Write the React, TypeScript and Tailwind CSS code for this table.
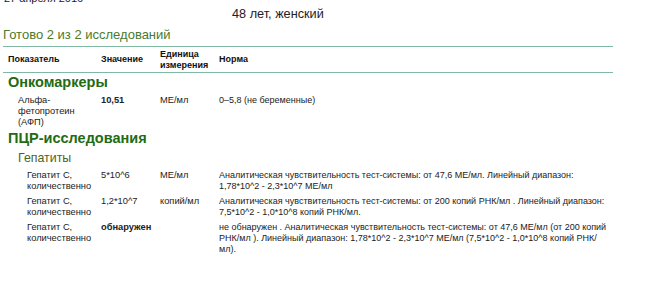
const font = { fontFamily: '"Liberation Sans", Arial, sans-serif' };

type Row = { name: string[]; value: string; bold?: boolean; unit: string; norm: string[] };

const onco: Row[] = [
  { name: ["Альфа-", "фетопротеин", "(АФП)"], value: "10,51", bold: true, unit: "МЕ/мл", norm: ["0–5,8 (не беременные)"] },
];

const pcr: Row[] = [
  {
    name: ["Гепатит С,", "количественно"],
    value: "5*10^6",
    unit: "МЕ/мл",
    norm: ["Аналитическая чувствительность тест-системы: от 47,6 МЕ/мл. Линейный диапазон:", "1,78*10^2 - 2,3*10^7 МЕ/мл"],
  },
  {
    name: ["Гепатит С,", "количественно"],
    value: "1,2*10^7",
    unit: "копий/мл",
    norm: ["Аналитическая чувствительность тест-системы: от 200 копий РНК/мл . Линейный диапазон:", "7,5*10^2 - 1,0*10^8 копий РНК/мл."],
  },
  {
    name: ["Гепатит С,", "количественно"],
    value: "обнаружен",
    bold: true,
    unit: "",
    norm: [
      "не обнаружен . Аналитическая чувствительность тест-системы: от 47,6 МЕ/мл (от 200 копий",
      "РНК/мл ). Линейный диапазон: 1,78*10^2 - 2,3*10^7 МЕ/мл (7,5*10^2 - 1,0*10^8 копий РНК/",
      "мл).",
    ],
  },
];

function ResultRow({ row, indent }: { row: Row; indent: string }) {
  return (
    <div className="grid grid-cols-[98px_59px_59px_1fr] text-[9.3px] leading-[11px] text-[#222]">
      <div className={indent}>
        {row.name.map((n, i) => (
          <div key={i}>{n}</div>
        ))}
      </div>
      <div className={row.bold ? "font-bold" : ""}>{row.value}</div>
      <div>{row.unit}</div>
      <div className="whitespace-nowrap text-[9px]">
        {row.norm.map((n, i) => (
          <div key={i}>{n}</div>
        ))}
      </div>
    </div>
  );
}

export default function App() {
  return (
    <div className="w-[649px] h-[291px] overflow-hidden bg-white" style={font}>
      <div className="ml-[4px] -mt-[8px] text-[11px] leading-[13px] text-[#222]">27 апреля 2016</div>
      <div className="pl-[232px] mt-[2px] text-[12.7px] leading-[15px] text-[#222]">48 лет, женский</div>

      <div className="ml-[3px] w-[610px]">
        <div className="mt-[5px] text-[13px] leading-[15px] text-[#4a7a2c]">Готово 2 из 2 исследований</div>

        <div className="mt-[4px] border-t border-b border-[#7fb8a3] grid grid-cols-[98px_59px_59px_1fr] items-center h-[27px] text-[9px] leading-[11px] font-bold text-[#111]">
          <div className="pl-[5px]">Показатель</div>
          <div>Значение</div>
          <div>
            Единица
            <br />
            измерения
          </div>
          <div>Норма</div>
        </div>

        <div className="pl-[5px] mt-[1px] text-[14.5px] leading-[17px] font-bold text-[#236b12]">Онкомаркеры</div>
        <div className="mt-[4px] flex flex-col gap-[4px]">
          {onco.map((r, i) => (
            <ResultRow key={i} row={r} indent="pl-[15px]" />
          ))}
        </div>

        <div className="pl-[5px] mt-[2px] text-[14.5px] leading-[17px] font-bold text-[#236b12]">ПЦР-исследования</div>
        <div className="pl-[15px] mt-[4px] text-[12.4px] leading-[15px] text-[#4d6420]">Гепатиты</div>
        <div className="mt-[4px] flex flex-col gap-[4px]">
          {pcr.map((r, i) => (
            <ResultRow key={i} row={r} indent="pl-[24px]" />
          ))}
        </div>
      </div>
    </div>
  );
}
